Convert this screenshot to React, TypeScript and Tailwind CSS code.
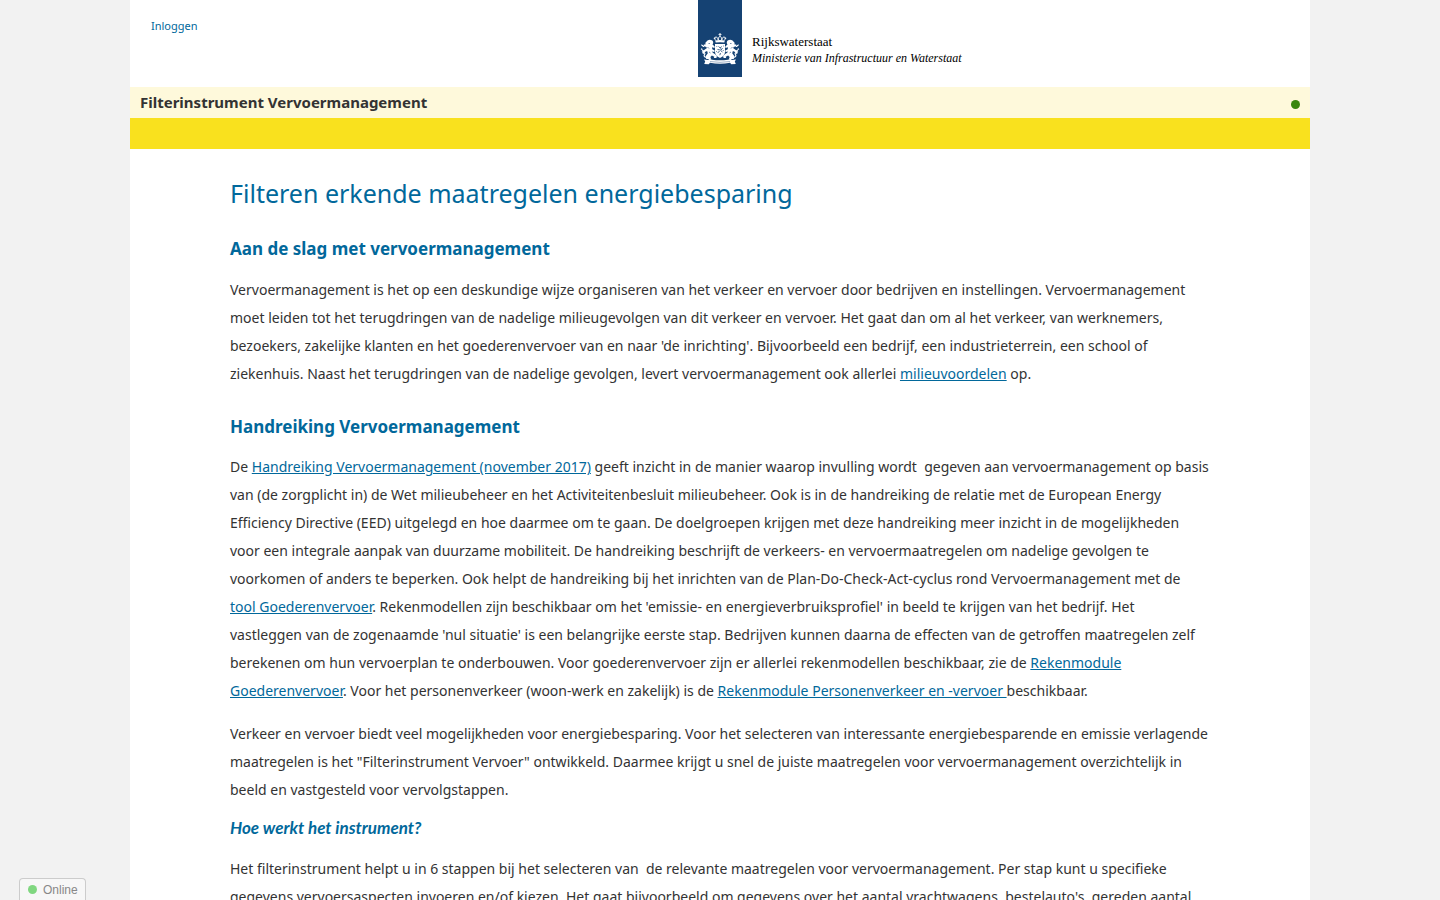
import type { ReactNode } from "react";

function TextLink({ children }: { children: ReactNode }) {
  return (
    <a href="#" className="text-[#01689b] underline">
      {children}
    </a>
  );
}

function Lion() {
  return (
    <g>
      <path d="M9.500 40.600c2-1.500 5-.7 5.500 1 .5 1.200.1 2.200-.5 3l2.200 1.800-.2 1.600-2.500-.7.300 2 2.400 1.300-.3 1.500-2.600-.5c.7 1.200 1.900 1.700 3.300 2.600l1.800 1.800-.5 2.100h-2.600l.5-1.400-2.400-1.300-1.500 1.600.6 2.100H8.200l-.4-3.200 2-2.700-.7-2.100-2.200.9-1.300 1.900-1.500-.9.600-1.200-1-.6.600-1.200 1.500.2 2.900-2-.2-1.200-2.600-.8-.1-1.600 1.700-.1-.1-1.700z" />
      <path
        d="M8.500 57.500c-2.300-.2-2.900-1.900-1.900-3.100.8-1.100-.1-1.900-1.300-1.600M6 46.500c-1.200-.1-1.500-1.700-2.800-1.500M4.500 49.500l-1.500-.6"
        fill="none"
        stroke="white"
        strokeWidth="1.2"
      />
      <path d="M10.500 43.500h1.500M9.500 47l1.500 1.500M11 52l1.500 1" stroke="#154273" strokeWidth=".6" />
    </g>
  );
}

function Emblem() {
  return (
    <svg viewBox="0 0 44 77" className="h-[77px] w-11" role="img" aria-label="Rijkswapen">
      <rect width="44" height="77" fill="#154273" />
      <g fill="white">
        <path d="M21.500 33h1v1.200h1v.8h-1v1.200h-1V35h-1v-.8h1z" />
        <path
          d="M17.800 40.500c-2-2.300-.8-3.800.8-3.300 1 .3 1.500 1.600 1.600 3.100 0-2.500.7-3.800 1.800-3.800s1.800 1.300 1.800 3.800c.1-1.500.6-2.800 1.600-3.100 1.600-.5 2.800 1 .8 3.300"
          fill="none"
          stroke="white"
          strokeWidth="1"
        />
        <path d="M17.200 40.400q4.800-1 9.600 0l-.5 2.200q-4.300-.8-8.600 0z" />
        <circle cx="16.500" cy="38.200" r=".8" />
        <circle cx="27.500" cy="38.200" r=".8" />
        <Lion />
        <g transform="translate(44 0) scale(-1 1)">
          <Lion />
        </g>
        <path d="M17 44h10v8c0 3-2.500 5-5 6-2.500-1-5-3-5-6z" />
        <path d="M6 59.500l4 .4 1.500-1.100 2.500.9q8 1.300 16 0l2.500-.9 1.500 1.100 4-.4-1.200 2.100 1 2.500-4.500.2-1.300-1.500q-10 1.800-20 0l-1.300 1.500-4.500-.2 1-2.500z" />
      </g>
      <path
        d="M20.500 46.500l1.500 1.300 1.800-1.200M19.500 49.500l2 .3 1.500-1.300M24.500 48l-1.700 2.500 1.700 1.800M21.500 51l-1.800 2M22.500 53l-.7 2.200M18.500 46.500h.7M25 46h.7M18.300 51.500h.7M24.800 50.500h.8"
        fill="none"
        stroke="#154273"
        strokeWidth=".8"
      />
      <path d="M12 61.500q10 1.700 20 0" fill="none" stroke="#154273" strokeWidth=".4" />
    </svg>
  );
}

export default function App() {
  return (
    <div className="min-h-screen bg-[#f2f2f2] font-['Noto_Sans',sans-serif] text-[#333]">
      <div className="mx-auto min-h-screen max-w-[1180px] bg-white">
        <header className="grid h-[87px] grid-cols-[568px_1fr] items-start">
          <nav className="pt-4 pl-[21px]">
            <a href="#" className="block text-[11px] leading-5 text-[#01689b]">
              Inloggen
            </a>
          </nav>
          <div className="flex gap-[10px]">
            <Emblem />
            <p className="pt-[34px] font-['Liberation_Serif',serif] text-[13px] leading-4 text-black">
              Rijkswaterstaat
              <br />
              <i className="text-[12px]">Ministerie van Infrastructuur en Waterstaat</i>
            </p>
          </div>
        </header>

        <div className="flex h-[31px] items-center justify-between bg-[#fef9db] px-[10px]">
          <strong className="text-[15px] leading-[31px] font-bold">Filterinstrument Vervoermanagement</strong>
          <span className="mt-1 size-[9px] rounded-full bg-[#39870c]" role="status" aria-label="Online" />
        </div>
        <div className="h-[31px] bg-[#f9e11e]" />

        <main className="px-[100px] pt-6 text-sm leading-7 whitespace-pre">
          <h1 className="text-[25px] leading-10 text-[#01689b]">Filteren erkende maatregelen energiebesparing</h1>

          <h2 className="mt-[22px] text-[17px] leading-7 font-bold text-[#01689b]">Aan de slag met vervoermanagement</h2>
          <p className="mt-[13px]">
            Vervoermanagement is het op een deskundige wijze organiseren van het verkeer en vervoer door bedrijven en instellingen. Vervoermanagement
            <br />
            moet leiden tot het terugdringen van de nadelige milieugevolgen van dit verkeer en vervoer. Het gaat dan om al het verkeer, van werknemers,
            <br />
            bezoekers, zakelijke klanten en het goederenvervoer van en naar 'de inrichting'. Bijvoorbeeld een bedrijf, een industrieterrein, een school of
            <br />
            ziekenhuis. Naast het terugdringen van de nadelige gevolgen, levert vervoermanagement ook allerlei <TextLink>milieuvoordelen</TextLink> op.
          </p>

          <h2 className="mt-[25px] text-[17px] leading-7 font-bold text-[#01689b]">Handreiking Vervoermanagement</h2>
          <p className="mt-3">
            De <TextLink>Handreiking Vervoermanagement (november 2017)</TextLink> geeft inzicht in de manier waarop invulling wordt&nbsp; gegeven aan vervoermanagement op basis
            <br />
            van (de zorgplicht in) de Wet milieubeheer en het Activiteitenbesluit milieubeheer. Ook is in de handreiking de relatie met de European Energy
            <br />
            Efficiency Directive (EED) uitgelegd en hoe daarmee om te gaan. De doelgroepen krijgen met deze handreiking meer inzicht in de mogelijkheden
            <br />
            voor een integrale aanpak van duurzame mobiliteit. De handreiking beschrijft de verkeers- en vervoermaatregelen om nadelige gevolgen te
            <br />
            voorkomen of anders te beperken. Ook helpt de handreiking bij het inrichten van de Plan-Do-Check-Act-cyclus rond Vervoermanagement met de
            <br />
            <TextLink>tool Goederenvervoer</TextLink>. Rekenmodellen zijn beschikbaar om het 'emissie- en energieverbruiksprofiel' in beeld te krijgen van het bedrijf. Het
            <br />
            vastleggen van de zogenaamde 'nul situatie' is een belangrijke eerste stap. Bedrijven kunnen daarna de effecten van de getroffen maatregelen zelf
            <br />
            berekenen om hun vervoerplan te onderbouwen. Voor goederenvervoer zijn er allerlei rekenmodellen beschikbaar, zie de{" "}
            <TextLink>
              Rekenmodule
              <br />
              Goederenvervoer
            </TextLink>
            . Voor het personenverkeer (woon-werk en zakelijk) is de <TextLink>Rekenmodule Personenverkeer en -vervoer </TextLink>beschikbaar.
          </p>
          <p className="mt-[15px]">
            Verkeer en vervoer biedt veel mogelijkheden voor energiebesparing. Voor het selecteren van interessante energiebesparende en emissie verlagende
            <br />
            maatregelen is het "Filterinstrument Vervoer" ontwikkeld. Daarmee krijgt u snel de juiste maatregelen voor vervoermanagement overzichtelijk in
            <br />
            beeld en vastgesteld voor vervolgstappen.
          </p>

          <h3 className="mt-[10px] font-[Lato,sans-serif] text-[17px] leading-7 font-bold text-[#01689b] italic">
            Hoe werkt het instrument?
          </h3>
          <p className="mt-[13px]">
            Het filterinstrument helpt u in 6 stappen bij het selecteren van&nbsp; de relevante maatregelen voor vervoermanagement. Per stap kunt u specifieke
            <br />
            gegevens vervoersaspecten invoeren en/of kiezen. Het gaat bijvoorbeeld om gegevens over het aantal vrachtwagens, bestelauto's, gereden aantal
          </p>
        </main>
      </div>

      <button
        type="button"
        className="fixed bottom-0 left-[19px] flex h-[22px] items-center gap-[6px] rounded-t border border-b-0 border-[#ccc] bg-[#f7f7f7] pr-[7px] pl-2 font-['Liberation_Sans',sans-serif] text-xs text-[#888]"
      >
        <span className="size-[9px] rounded-full bg-[#80d780]" />
        Online
      </button>
    </div>
  );
}
